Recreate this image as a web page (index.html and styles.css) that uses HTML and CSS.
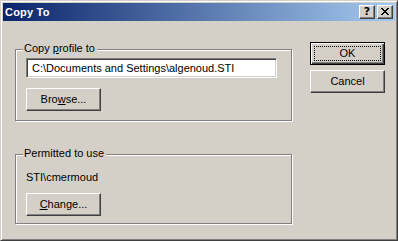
FILE: index.html
```html
<!DOCTYPE html>
<html>
<head>
<meta charset="utf-8">
<link rel="stylesheet" href="styles.css">
</head>
<body>
<div class="window">
  <div class="titlebar">
    <span class="title">Copy To</span>
    <div class="tbtns">
      <div class="tbtn help">?</div>
      <div class="tbtn close">
        <svg width="8" height="7" viewBox="0 0 8 7" shape-rendering="crispEdges">
          <path fill="#000" d="M0 0h2v1h-2zM6 0h2v1h-2zM1 1h2v1h-2zM5 1h2v1h-2zM2 2h4v1h-4zM3 3h2v1h-2zM2 4h4v1h-4zM1 5h2v1h-2zM5 5h2v1h-2zM0 6h2v1h-2zM6 6h2v1h-2z"/>
        </svg>
      </div>
    </div>
  </div>
  <div class="content">
    <div class="left">
      <div class="group g1">
        <span class="legend">Copy <u>p</u>rofile to</span>
        <div class="edit">C:\Documents and Settings\algenoud.STI</div>
        <div class="btn">Bro<u>w</u>se...</div>
      </div>
      <div class="group g2">
        <span class="legend">Permitted to use</span>
        <div class="label">STI\cmermoud</div>
        <div class="btn"><u>C</u>hange...</div>
      </div>
    </div>
    <div class="right">
      <div class="btn default"><span class="focus">OK</span></div>
      <div class="btn">Cancel</div>
    </div>
  </div>
</div>
</body>
</html>
```
FILE: styles.css
```css
* { box-sizing: border-box; }
html, body { margin: 0; padding: 0; background: #d4d0c8; }
body {
  font-family: "Liberation Sans", Arial, sans-serif;
  font-size: 11px;
  color: #000;
}
.window {
  width: 398px;
  height: 241px;
  background: #d4d0c8;
  border: 1px solid;
  border-color: #d4d0c8 #404040 #404040 #d4d0c8;
  box-shadow: inset 1px 1px 0 #fff, inset -1px -1px 0 #808080;
  padding: 2px;
  display: flex;
  flex-direction: column;
}
.titlebar {
  height: 18px;
  background: linear-gradient(to right, #0a246a, #a6caf0);
  display: flex;
  align-items: center;
  justify-content: space-between;
  padding: 0 2px 0 2px;
}
.title {
  color: #fff;
  font-weight: bold;
  font-size: 11px;
  padding-left: 0px;
  letter-spacing: 0.2px;
}
.tbtns { display: flex; gap: 2px; }
.tbtn {
  width: 16px;
  height: 14px;
  background: #d4d0c8;
  border: 1px solid;
  border-color: #fff #404040 #404040 #fff;
  box-shadow: inset -1px -1px 0 #808080;
  display: flex;
  align-items: center;
  justify-content: center;
}
.help {
  font-family: "DejaVu Sans", sans-serif;
  font-weight: bold;
  font-size: 11px;
  line-height: 12px;
  padding-bottom: 1px;
}
.close svg { display: block; margin-left: -1px; margin-top: -1px; }
.content {
  display: flex;
  padding: 28px 0 0 12px;
}
.left {
  width: 278px;
  display: flex;
  flex-direction: column;
}
.group {
  position: relative;
  width: 277px;
  border: 1px solid #808080;
  box-shadow: 1px 1px 0 #fff, inset 1px 1px 0 #fff;
  display: flex;
  flex-direction: column;
  align-items: flex-start;
  padding-left: 10px;
}
.legend {
  position: absolute;
  left: 7px;
  top: -8px;
  background: #d4d0c8;
  padding: 0 2px 0 1px;
  line-height: 13px;
}
.g1 { height: 72px; padding-top: 8px; }
.g2 { height: 70px; margin-top: 33px; padding-top: 16px; }
.edit {
  width: 251px;
  height: 20px;
  background: #fff;
  border: 1px solid;
  border-color: #808080 #fff #fff #808080;
  box-shadow: inset 1px 1px 0 #404040, inset -1px -1px 0 #d4d0c8;
  padding: 3px 0 0 5px;
  line-height: 13px;
  white-space: nowrap;
}
.label { line-height: 13px; height: 22px; }
.btn {
  width: 75px;
  height: 23px;
  border: 1px solid;
  border-color: #fff #404040 #404040 #fff;
  box-shadow: inset -1px -1px 0 #808080;
  display: flex;
  align-items: center;
  justify-content: center;
  line-height: 13px;
}
.g1 .btn { margin-top: 10px; }
.right {
  display: flex;
  flex-direction: column;
  gap: 5px;
  margin-left: 17px;
  margin-top: -7px;
}
.btn.default {
  border: 1px solid #000;
  box-shadow: inset 1px 1px 0 #fff, inset -1px -1px 0 #404040, inset -2px -2px 0 #808080;
  padding: 3px;
}
.focus {
  width: 100%;
  height: 100%;
  border: 1px dotted #000;
  display: flex;
  align-items: center;
  justify-content: center;
}
```
